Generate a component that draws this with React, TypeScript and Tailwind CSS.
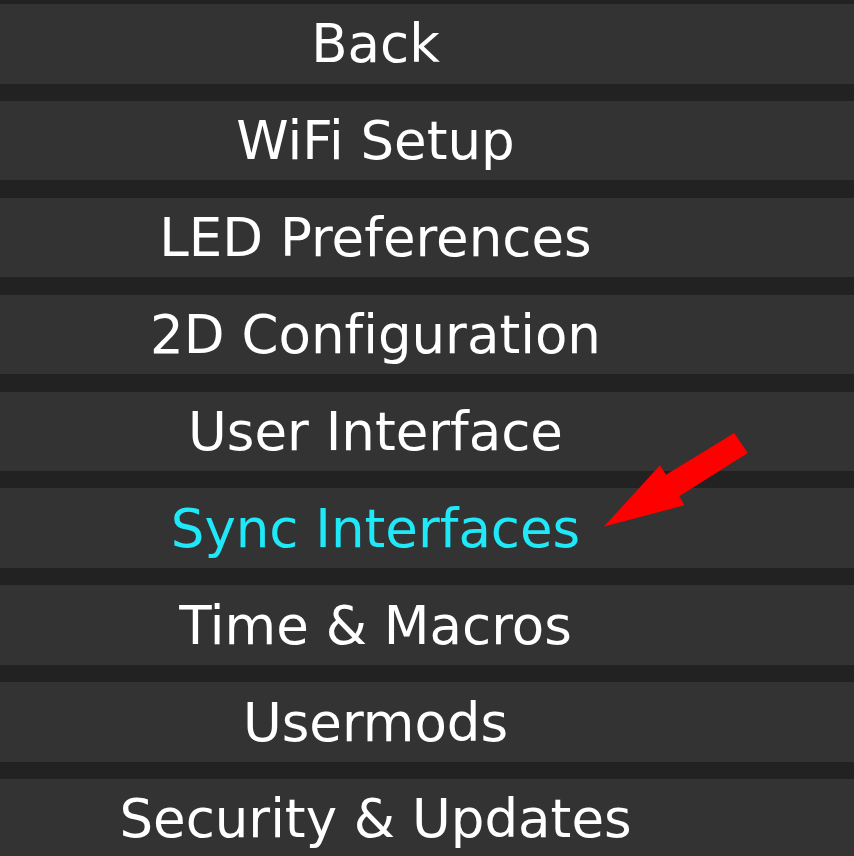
const ITEMS = [
  { label: "Back" },
  { label: "WiFi Setup" },
  { label: "LED Preferences" },
  { label: "2D Configuration" },
  { label: "User Interface" },
  { label: "Sync Interfaces", active: true },
  { label: "Time & Macros" },
  { label: "Usermods" },
  { label: "Security & Updates" },
];

const Arrow = () => (
  <svg className="absolute left-0 top-0 pointer-events-none" width="854" height="856" viewBox="0 0 854 856" aria-hidden="true">
    <polygon
      points="604,526.5 660,465.3 666,474.7 734.3,433 747.7,453 679.3,496.3 684.5,505.3"
      fill="#ff0000"
    />
  </svg>
);

export default function App() {
  return (
    <div className="relative w-[854px] h-[856px] overflow-hidden bg-[#222222] font-['DejaVu_Sans',Verdana,sans-serif] [font-variant-ligatures:none]">
      <div className="flex flex-col gap-[17.3px] pt-[4px]">
        {ITEMS.map((item) => (
          <div
            key={item.label}
            className={
              "h-[79.6px] shrink-0 flex items-center justify-center bg-[#333333] pr-[103px] text-[53px] leading-none whitespace-nowrap " +
              (item.active ? "text-[#1fe8f8]" : "text-white")
            }
          >
            {item.label}
          </div>
        ))}
      </div>
      <Arrow />
    </div>
  );
}
